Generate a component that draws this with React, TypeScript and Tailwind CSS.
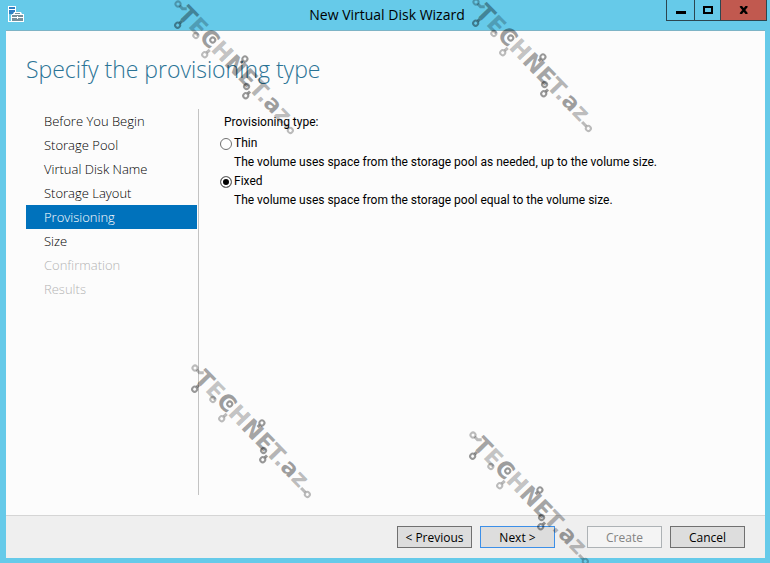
import { useState } from "react"
import clsx from "clsx"

const steps = [
  { name: "Before You Begin" },
  { name: "Storage Pool" },
  { name: "Virtual Disk Name" },
  { name: "Storage Layout" },
  { name: "Provisioning" },
  { name: "Size" },
  { name: "Confirmation", disabled: true },
  { name: "Results", disabled: true },
]

const options = [
  {
    id: "thin",
    label: "Thin",
    text: "The volume uses space from the storage pool as needed, up to the volume size.",
  },
  {
    id: "fixed",
    label: "Fixed",
    text: "The volume uses space from the storage pool equal to the volume size.",
  },
]

function ServerIcon() {
  return (
    <svg width="18" height="18" viewBox="0 0 18 18" className="shrink-0" aria-hidden="true">
      <path d="M1 1h8v16H1z" fill="#fff" />
      <path d="M2 2h6v2H2zM2 5h6v4H2z" fill="#2f80c4" />
      <path d="M2 9h3v7H2z" fill="#66cae9" />
      <path d="M7 7h7l1 2h2v8H4v-7l2-1z" fill="#fff" />
      <path d="M5 10h11v6H5z" fill="#76909c" />
      <path d="M8 8h5v1H8z" fill="#76909c" />
      <path d="M5 12h11v1H5zM10 11h1v3h-1z" fill="#fff" />
    </svg>
  )
}

// site logo: letters along a diagonal, with circuit traces ending in small rings
function Watermark({ className }: { className: string }) {
  return (
    <svg
      width="126"
      height="136"
      viewBox="-6 -6 126 136"
      className={clsx("pointer-events-none absolute overflow-visible", className)}
    >
      <g transform="rotate(46)">
        <text x="7" y="9" fontSize="23" fontWeight="700" fontFamily="DejaVu Sans, sans-serif" fill="#000">
          <tspan fillOpacity="0.36">T</tspan>
          <tspan fillOpacity="0.22">E</tspan>
          <tspan fillOpacity="0.38">C</tspan>
          <tspan fillOpacity="0.24">H</tspan>
          <tspan fillOpacity="0.36">N</tspan>
          <tspan fillOpacity="0.34">E</tspan>
          <tspan fillOpacity="0.28">T</tspan>
          <tspan fillOpacity="0.26">.</tspan>
          <tspan fillOpacity="0.38">a</tspan>
          <tspan fillOpacity="0.26">z</tspan>
        </text>
        <g fill="none" stroke="#000" strokeWidth="2">
          <g strokeOpacity="0.26">
            <circle cx="0" cy="0" r="2.5" />
            <path d="M2.5 0h4l3 -3" strokeWidth="3" />
            <circle cx="35" cy="9" r="2.5" />
            <circle cx="55" cy="16" r="2.5" />
            <path d="M55 13v-4" strokeWidth="3" />
            <circle cx="169" cy="7" r="2.5" />
            <path d="M166 7h-6" strokeWidth="3" />
          </g>
          <g strokeOpacity="0.4">
            <circle cx="15" cy="15" r="2.5" />
            <path d="M15 12v-3" strokeWidth="3" />
            <circle cx="50" cy="0" r="2.5" />
            <circle cx="86" cy="-10" r="2.5" />
            <path d="M86 -7v3" strokeWidth="3" />
            <circle cx="107" cy="8" r="2.5" />
            <circle cx="113" cy="15" r="2.5" />
            <path d="M113 12v-3" strokeWidth="3" />
          </g>
        </g>
      </g>
    </svg>
  )
}

function FooterButton({
  children,
  primary,
  disabled,
}: {
  children: string
  primary?: boolean
  disabled?: boolean
}) {
  return (
    <button
      type="button"
      disabled={disabled}
      className={clsx(
        "h-[22px] w-[75px] border pt-px text-xs leading-5",
        disabled && "border-[#adb2b5] bg-[#f4f4f4] text-[#838383]",
        !disabled && "bg-[#dddddd] text-black",
        !disabled && (primary ? "border-[#3c8fe8]" : "border-[#707070]"),
      )}
    >
      {children}
    </button>
  )
}

export default function App() {
  const [provisioning, setProvisioning] = useState("fixed")

  return (
    <div className="relative flex min-h-screen flex-col overflow-hidden bg-[#66cae9] pr-[5px] pb-[5px] pl-1.5 font-['Open_Sans','Noto_Sans',sans-serif] text-black">
      <header className="-mr-0.5 flex h-[30px] items-start">
        <div className="flex flex-1 pt-[5px] pl-px">
          <ServerIcon />
        </div>
        <h1 className="pt-1 text-sm leading-[22px]">New Virtual Disk Wizard</h1>
        <div className="flex flex-1 justify-end">
          <div className="flex h-[21px] divide-x divide-[#2c4650] border border-t-0 border-[#2c4650]">
            <button type="button" aria-label="Minimize" className="flex w-7 items-center justify-center">
              <svg width="10" height="3" aria-hidden="true" className="mt-1">
                <path d="M0 0h10v3H0z" />
              </svg>
            </button>
            <button type="button" aria-label="Maximize" className="flex w-[26px] items-center justify-center">
              <svg width="10" height="8" aria-hidden="true">
                <path d="M1 1h8v6H1z" fill="none" stroke="#000" strokeWidth="2" />
              </svg>
            </button>
            <button type="button" aria-label="Close" className="flex w-[45px] items-center justify-center bg-[#c1594f]">
              <svg width="10" height="8" aria-hidden="true">
                <path d="M1.5 0l6.5 8M8 0L1.5 8" stroke="#000" strokeWidth="2.4" />
              </svg>
            </button>
          </div>
        </div>
      </header>

      <div className="flex flex-1 flex-col border-t border-[#7db4c6] bg-[#fcfcfc]">
        <h2 className="px-5 pt-[18px] text-[23px] leading-10 font-light text-[#2a7395]">
          Specify the provisioning type
        </h2>

        <div className="flex flex-1 px-5 pt-5 pb-5">
          <nav className="w-[173px] shrink-0 border-r border-[#c3c3c3] pr-px">
            {steps.map((step) => (
              <a
                key={step.name}
                href="#"
                aria-disabled={step.disabled}
                aria-current={step.name === "Provisioning" ? "step" : undefined}
                className={clsx(
                  "block pl-[18px] text-[13px] leading-6 font-light",
                  step.name === "Provisioning" && "bg-[#0072bc] text-white",
                  step.disabled ? "text-[#b4b4b4]" : step.name !== "Provisioning" && "text-black",
                )}
              >
                {step.name}
              </a>
            ))}
          </nav>

          <fieldset className="min-w-0 flex-1 pt-1 pl-[21px] font-[Roboto,'Open_Sans',sans-serif] text-xs leading-[19px]">
            <legend className="float-left mb-0.5 w-full pl-1">Provisioning type:</legend>
            {options.map((option) => (
              <div key={option.id} className="clear-both">
                <label className="flex items-center gap-0.5">
                  <input
                    type="radio"
                    name="provisioning"
                    value={option.id}
                    checked={provisioning === option.id}
                    onChange={() => setProvisioning(option.id)}
                    className="size-3 appearance-none rounded-full border border-[#707070] bg-white checked:bg-black checked:shadow-[inset_0_0_0_2px_#fff]"
                  />
                  {option.label}
                </label>
                <p className="pl-3.5">{option.text}</p>
              </div>
            ))}
          </fieldset>
        </div>

        <footer className="flex justify-end border-t border-[#d5d5d5] bg-[#efefef] pt-2.5 pr-5 pb-[10px]">
          <div className="flex gap-2">
            <FooterButton>{"< Previous"}</FooterButton>
            <FooterButton primary>{"Next >"}</FooterButton>
          </div>
          <div className="ml-8 flex gap-2">
            <FooterButton disabled>Create</FooterButton>
            <FooterButton>Cancel</FooterButton>
          </div>
        </footer>
      </div>

      <Watermark className="top-[-2px] left-[172px]" />
      <Watermark className="top-[-4px] left-[470px]" />
      <Watermark className="top-[362px] left-[189px]" />
      <Watermark className="top-[429px] left-[467px]" />
    </div>
  )
}
